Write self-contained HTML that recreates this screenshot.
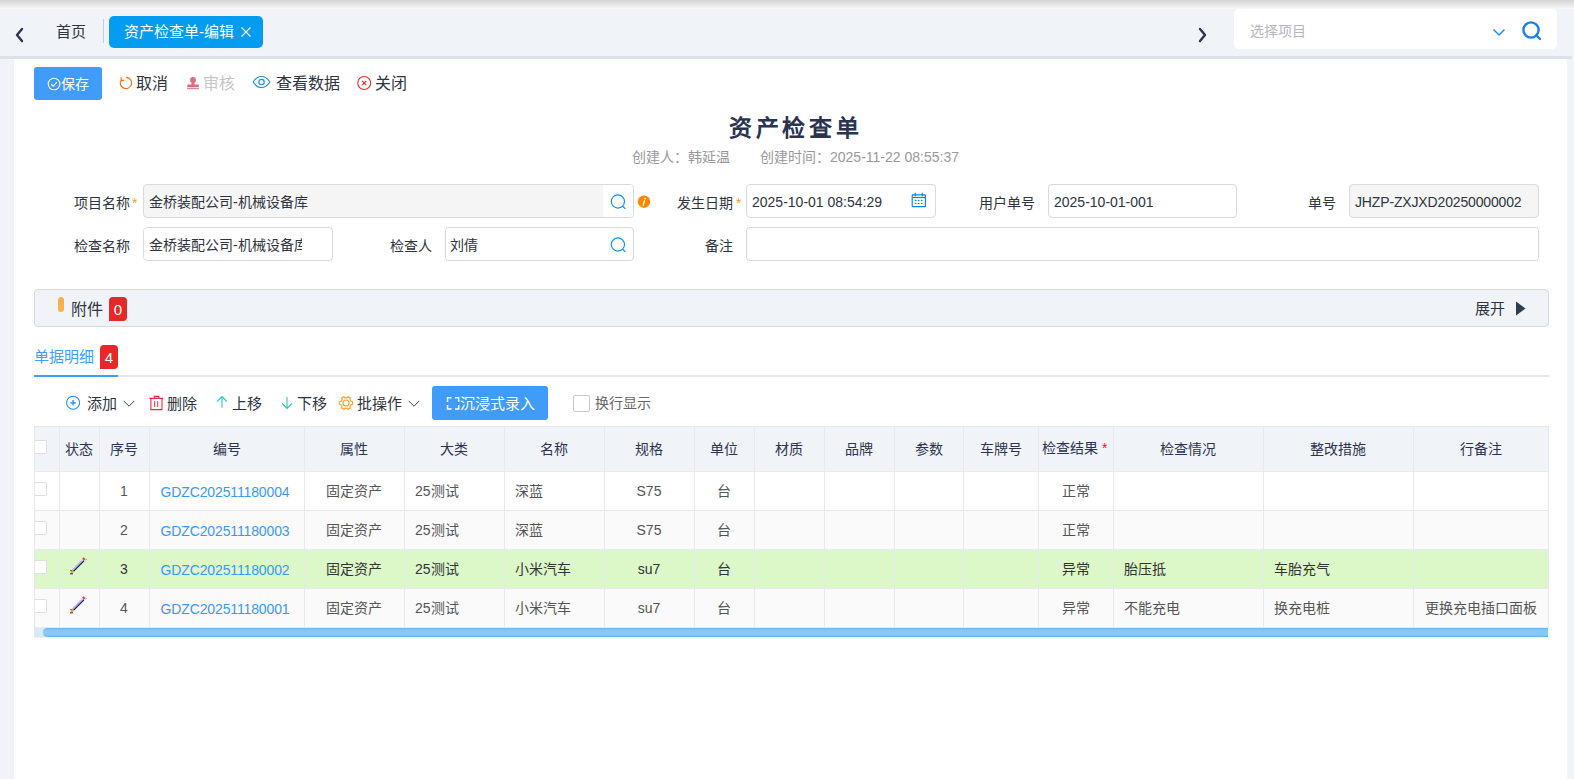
<!DOCTYPE html>
<html lang="zh-CN">
<head>
<meta charset="utf-8">
<style>
*{box-sizing:border-box;margin:0;padding:0}
html,body{width:1574px;height:779px;overflow:hidden}
body{position:relative;background:#f0f3f8;font-family:"Liberation Sans",sans-serif;color:#333;font-size:14px}
.a{position:absolute}
.t{position:absolute;white-space:nowrap;line-height:1}
#topshadow{left:0;top:0;width:1574px;height:9px;background:linear-gradient(#d4d4d4,#f8f8f8)}
#tabline{left:0;top:56px;width:1572px;height:3px;background:#dde2ea}
#content{left:14px;top:59px;width:1553px;height:720px;background:#fff}
.inp{position:absolute;border:1px solid #d9dadd;border-radius:4px;background:#fff;height:34px}
.lbl{position:absolute;white-space:nowrap;line-height:1;font-size:14px;color:#2e3440}
</style>
</head>
<body>
<div class="a" id="topshadow"></div>
<div class="a" id="tabline"></div>
<div class="a" id="content"></div>

<!-- tab bar -->
<svg class="a" style="left:14px;top:26px" width="12" height="18" viewBox="0 0 12 18"><path d="M8 3 L3 9 L8 15" fill="none" stroke="#2b3352" stroke-width="2.4" stroke-linecap="round" stroke-linejoin="round"/></svg>
<div class="t" style="left:56px;top:24px;font-size:15px;color:#2e3440">首页</div>
<div class="a" style="left:103px;top:19px;width:1px;height:24px;background:#c9ccd3"></div>
<div class="a" style="left:109px;top:16px;width:154px;height:32px;background:#049cf0;border-radius:5px"></div>
<div class="t" style="left:124px;top:24px;font-size:15px;color:#fff">资产检查单-编辑</div>
<svg class="a" style="left:239.5px;top:26px" width="12" height="12" viewBox="0 0 12 12"><path d="M1.5 1.5L10.5 10.5M10.5 1.5L1.5 10.5" stroke="#fff" stroke-width="1.2"/></svg>

<svg class="a" style="left:1196px;top:26px" width="12" height="18" viewBox="0 0 12 18"><path d="M4 3 L9 9 L4 15" fill="none" stroke="#2b3352" stroke-width="2.4" stroke-linecap="round" stroke-linejoin="round"/></svg>
<div class="a" style="left:1234px;top:9px;width:323px;height:40px;background:#fff;border-radius:5px"></div>
<div class="t" style="left:1250px;top:24px;font-size:14px;color:#b4b8c0">选择项目</div>
<svg class="a" style="left:1492px;top:27px" width="14" height="10" viewBox="0 0 14 10"><path d="M1.5 2.5L7 8L12.5 2.5" fill="none" stroke="#1f8ff0" stroke-width="1.5"/></svg>
<svg class="a" style="left:1521px;top:20px" width="22" height="22" viewBox="0 0 22 22"><circle cx="10" cy="10" r="7.6" fill="none" stroke="#1a7ff0" stroke-width="2.4"/><path d="M15.5 15.5L19 19" stroke="#1a7ff0" stroke-width="2.4" stroke-linecap="round"/></svg>


<!-- toolbar -->
<div class="a" style="left:34px;top:67px;width:68px;height:33px;background:#409cf8;border-radius:3px"></div>
<svg class="a" style="left:47px;top:76.5px" width="14" height="14" viewBox="0 0 14 14"><circle cx="7" cy="7" r="5.8" fill="none" stroke="#fff" stroke-width="1.05"/><path d="M4.2 7.2L6.2 9.1L9.9 5.2" fill="none" stroke="#fff" stroke-width="1.2"/></svg>
<div class="t" style="left:61px;top:77px;font-size:14px;color:#fff">保存</div>
<svg class="a" style="left:118px;top:75px" width="16" height="16" viewBox="0 0 16 16"><path d="M8 2.35A5.65 5.65 0 1 1 3.1 5.2" fill="none" stroke="#ff6a0a" stroke-width="1.1"/><path d="M3.1 2.2L3.3 5.6L6.4 5.1" fill="none" stroke="#ff6a0a" stroke-width="1.1"/></svg>
<div class="t" style="left:136px;top:76px;font-size:16px;color:#2e3440">取消</div>
<svg class="a" style="left:186px;top:76px" width="14" height="14" viewBox="0 0 14 14"><circle cx="7" cy="4" r="2.9" fill="#dc6d81"/><path d="M5.8 6h2.4l0.5 2.6h3.6l0.6 0.8v1.8H1.2V9.4l0.6-0.8h3.5z" fill="#dc6d81"/><rect x="1" y="12.2" width="12" height="1" fill="#dc6d81"/></svg>
<div class="t" style="left:203px;top:76px;font-size:16px;color:#c3c6cd">审核</div>
<svg class="a" style="left:252px;top:75px" width="19" height="14" viewBox="0 0 19 14"><path d="M1.2 7C3.6 3 6.4 1.5 9.5 1.5S15.4 3 17.8 7C15.4 11 12.6 12.5 9.5 12.5S3.6 11 1.2 7z" fill="none" stroke="#1890f0" stroke-width="1.15"/><circle cx="9.5" cy="7" r="2.7" fill="none" stroke="#1890f0" stroke-width="1.15"/></svg>
<div class="t" style="left:276px;top:76px;font-size:16px;color:#2e3440">查看数据</div>
<svg class="a" style="left:357px;top:76px" width="14" height="14" viewBox="0 0 14 14"><circle cx="7.2" cy="7" r="6.45" fill="none" stroke="#f42828" stroke-width="1.1"/><path d="M5.1 4.9L9.3 9.1M9.3 4.9L5.1 9.1" stroke="#f42828" stroke-width="1.2"/></svg>
<div class="t" style="left:375px;top:76px;font-size:16px;color:#2e3440">关闭</div>

<!-- title -->
<div class="t" style="left:729px;top:117px;font-size:23px;font-weight:bold;letter-spacing:3.7px;color:#2b3350">资产检查单</div>
<div class="t" style="left:632px;top:150px;font-size:14px;color:#999">创建人：韩延温</div>
<div class="t" style="left:760px;top:150px;font-size:14px;color:#999">创建时间：2025-11-22 08:55:37</div>

<!-- form row 1 -->
<div class="lbl" style="left:74px;top:196px">项目名称</div>
<div class="t" style="left:132px;top:196px;font-size:14px;color:#f79a2e">*</div>
<div class="inp" style="left:143px;top:184px;width:491px;height:34px;background:#f5f5f5"></div>
<div class="a" style="left:603px;top:185px;width:30px;height:32px;background:#fff;border-radius:0 3px 3px 0"></div>
<div class="lbl" style="left:149px;top:195px">金桥装配公司-机械设备库</div>
<svg class="a" style="left:610px;top:193px" width="17" height="17" viewBox="0 0 17 17"><circle cx="7.9" cy="8.5" r="6.6" fill="none" stroke="#0a8ff8" stroke-width="1.15"/><path d="M12.6 13.1L15.4 15.9" stroke="#0a8ff8" stroke-width="1.2"/></svg>
<svg class="a" style="left:637px;top:195px" width="14" height="14" viewBox="0 0 14 14"><circle cx="7" cy="6.7" r="6.2" fill="#fd8800"/><ellipse cx="8.1" cy="3.6" rx="0.95" ry="0.8" fill="#fff"/><path d="M7.5 5.6L6.2 10.4" stroke="#fff" stroke-width="1.25" stroke-linecap="round"/></svg>
<div class="lbl" style="left:677px;top:196px">发生日期</div>
<div class="t" style="left:736px;top:196px;font-size:14px;color:#f79a2e">*</div>
<div class="inp" style="left:746px;top:184px;width:190px;height:34px"></div>
<div class="lbl" style="left:752px;top:195px">2025-10-01 08:54:29</div>
<svg class="a" style="left:905px;top:188px" width="28" height="24" viewBox="0 0 28 24"><rect x="7.2" y="6.8" width="13.2" height="11.8" rx="0.6" fill="none" stroke="#0a84f5" stroke-width="1.15"/><path d="M7.2 9.5H20.4" stroke="#0a84f5" stroke-width="1.15"/><path d="M10.3 5.2V7.8M17.3 5.2V7.8" stroke="#0a84f5" stroke-width="1.2" stroke-linecap="round"/><g fill="#0a84f5"><ellipse cx="10.6" cy="12.5" rx="0.95" ry="0.7"/><ellipse cx="13.6" cy="12.5" rx="0.95" ry="0.7"/><ellipse cx="16.7" cy="12.5" rx="0.95" ry="0.7"/><ellipse cx="10.6" cy="15.4" rx="0.95" ry="0.7"/><ellipse cx="13.6" cy="15.4" rx="0.95" ry="0.7"/><ellipse cx="16.7" cy="15.4" rx="0.95" ry="0.7"/></g></svg>
<div class="lbl" style="left:979px;top:196px">用户单号</div>
<div class="inp" style="left:1048px;top:184px;width:189px;height:34px"></div>
<div class="lbl" style="left:1054px;top:195px">2025-10-01-001</div>
<div class="lbl" style="left:1308px;top:196px">单号</div>
<div class="inp" style="left:1349px;top:184px;width:190px;height:34px;background:#f5f5f5"></div>
<div class="lbl" style="left:1355px;top:195px;letter-spacing:-0.15px">JHZP-ZXJXD20250000002</div>

<!-- form row 2 -->
<div class="lbl" style="left:74px;top:239px">检查名称</div>
<div class="inp" style="left:143px;top:227px;width:190px;height:34px"></div>
<div class="lbl" style="left:149px;top:238px;width:153px;overflow:hidden">金桥装配公司-机械设备库</div>
<div class="lbl" style="left:390px;top:239px">检查人</div>
<div class="inp" style="left:445px;top:227px;width:189px;height:34px"></div>
<div class="lbl" style="left:450px;top:238px">刘倩</div>
<svg class="a" style="left:610px;top:236px" width="17" height="17" viewBox="0 0 17 17"><circle cx="7.9" cy="8.5" r="6.6" fill="none" stroke="#0a8ff8" stroke-width="1.15"/><path d="M12.6 13.1L15.4 15.9" stroke="#0a8ff8" stroke-width="1.2"/></svg>
<div class="lbl" style="left:705px;top:239px">备注</div>
<div class="inp" style="left:746px;top:227px;width:793px;height:34px"></div>

<!-- attachments -->
<div class="a" style="left:34px;top:289px;width:1515px;height:38px;background:#f0f3f8;border:1px solid #d8d9db;border-radius:4px"></div>
<div class="a" style="left:58px;top:297px;width:6px;height:15px;background:#fcae4f;border-radius:3px"></div>
<div class="t" style="left:71px;top:302px;font-size:16px;color:#2e3440">附件</div>
<div class="a" style="left:109px;top:297px;width:18px;height:24px;background:#e62828;border-radius:4px 4px 4px 0"></div>
<div class="t" style="left:109px;top:302px;width:18px;text-align:center;font-size:15px;color:#fff">0</div>
<div class="t" style="left:1475px;top:301px;font-size:15px;color:#2e3440">展开</div>
<svg class="a" style="left:1515px;top:301px" width="11" height="15" viewBox="0 0 11 15"><path d="M1 0.5L10.5 7.5L1 14.5z" fill="#2c3e50"/></svg>

<!-- detail tab -->
<div class="t" style="left:34px;top:349px;font-size:15px;color:#409eff">单据明细</div>
<div class="a" style="left:100px;top:345px;width:18px;height:24px;background:#e62828;border-radius:4px 4px 4px 0"></div>
<div class="t" style="left:100px;top:350px;width:18px;text-align:center;font-size:15px;color:#fff">4</div>
<div class="a" style="left:34px;top:375px;width:1515px;height:2px;background:#e4e7ed"></div>
<div class="a" style="left:34px;top:375px;width:84px;height:2px;background:#409eff"></div>

<!-- table toolbar -->
<svg class="a" style="left:65px;top:395px" width="16" height="16" viewBox="0 0 16 16"><circle cx="8.1" cy="7.8" r="6.5" fill="none" stroke="#1890ff" stroke-width="1.05"/><path d="M8.1 5V10.6M5.3 7.8H10.9" stroke="#1890ff" stroke-width="1.3"/></svg>
<div class="t" style="left:87px;top:396px;font-size:15px;color:#2e3440">添加</div>
<svg class="a" style="left:123px;top:400px" width="12" height="8" viewBox="0 0 12 8"><path d="M0.8 1L6 6.2L11.2 1" fill="none" stroke="#3a4050" stroke-width="1"/></svg>
<svg class="a" style="left:145px;top:390px" width="22" height="22" viewBox="0 0 22 22"><path d="M4.3 8.4H18.1M9.2 8.4V6.4H13.8V8.4M5.9 8.4V19.6H17V8.4" fill="none" stroke="#f0283c" stroke-width="1.1"/><path d="M9.7 11.2V17M12.7 11.2V17" stroke="#f0283c" stroke-width="1"/></svg>
<div class="t" style="left:167px;top:396px;font-size:15px;color:#2e3440">删除</div>
<svg class="a" style="left:215px;top:395px" width="14" height="14" viewBox="0 0 14 14"><path d="M7 12.8V1.8M2 6.6L7 1.6L12 6.6" fill="none" stroke="#1fcbbf" stroke-width="1.05"/></svg>
<div class="t" style="left:232px;top:396px;font-size:15px;color:#2e3440">上移</div>
<svg class="a" style="left:280px;top:396px" width="14" height="14" viewBox="0 0 14 14"><path d="M7 1V12.2M2 7.4L7 12.4L12 7.4" fill="none" stroke="#1fcbbf" stroke-width="1.05"/></svg>
<div class="t" style="left:297px;top:396px;font-size:15px;color:#2e3440">下移</div>
<svg class="a" style="left:338px;top:395px" width="16" height="16" viewBox="0 0 16 16"><path d="M12.68 5.51 L13.07 6.45 L14.58 6.72 L14.58 9.28 L13.07 9.55 L12.68 10.49 L12.49 10.81 L11.88 11.61 L12.40 13.06 L10.18 14.33 L9.19 13.16 L8.18 13.30 L7.82 13.30 L6.81 13.16 L5.82 14.33 L3.60 13.06 L4.12 11.61 L3.51 10.81 L3.32 10.49 L2.93 9.55 L1.42 9.28 L1.42 6.72 L2.93 6.45 L3.32 5.51 L3.51 5.19 L4.12 4.39 L3.60 2.94 L5.82 1.67 L6.81 2.84 L7.82 2.70 L8.18 2.70 L9.19 2.84 L10.18 1.67 L12.40 2.94 L11.88 4.39 L12.49 5.19Z" fill="none" stroke="#ff9a1f" stroke-width="1.1" stroke-linejoin="round"/><circle cx="8" cy="8" r="3" fill="none" stroke="#ff9a1f" stroke-width="1.1"/></svg>
<div class="t" style="left:357px;top:396px;font-size:15px;color:#2e3440">批操作</div>
<svg class="a" style="left:408px;top:400px" width="12" height="8" viewBox="0 0 12 8"><path d="M0.8 1L6 6.2L11.2 1" fill="none" stroke="#3a4050" stroke-width="1"/></svg>
<div class="a" style="left:432px;top:386px;width:116px;height:34px;background:#409cf8;border-radius:3px"></div>
<svg class="a" style="left:440px;top:392px" width="22" height="22" viewBox="0 0 22 22"><path d="M11.6 5.8H7.5V9.9M15 5.8H18.7V9.9M7.5 13V16.9H11.6M18.7 13V16.9H15" fill="none" stroke="#fff" stroke-width="1.5"/></svg>
<div class="t" style="left:460px;top:396px;font-size:15px;color:#fff">沉浸式录入</div>
<div class="a" style="left:573px;top:395px;width:17px;height:17px;border:1px solid #c6c9cf;border-radius:2px;background:#fff"></div>
<div class="t" style="left:595px;top:396px;font-size:14px;color:#666">换行显示</div>


<!-- table -->
<div class="a" style="left:34px;top:426px;width:1515px;height:45px;background:#f0f3f8"></div>
<div class="a" style="left:34px;top:471px;width:1515px;height:39px;background:#ffffff"></div>
<div class="a" style="left:34px;top:510px;width:1515px;height:39px;background:#fafafa"></div>
<div class="a" style="left:34px;top:549px;width:1515px;height:39px;background:#dcf7c8"></div>
<div class="a" style="left:34px;top:588px;width:1515px;height:39px;background:#fafafa"></div>
<div class="a" style="left:34px;top:426px;width:1515px;height:1px;background:#e8e9ec"></div>
<div class="a" style="left:34px;top:471px;width:1515px;height:1px;background:#e8e9ec"></div>
<div class="a" style="left:34px;top:510px;width:1515px;height:1px;background:#e8e9ec"></div>
<div class="a" style="left:34px;top:549px;width:1515px;height:1px;background:#e8e9ec"></div>
<div class="a" style="left:34px;top:588px;width:1515px;height:1px;background:#e8e9ec"></div>
<div class="a" style="left:34px;top:627px;width:1515px;height:1px;background:#e8e9ec"></div>
<div class="a" style="left:34px;top:426px;width:1px;height:201px;background:#e8e9ec"></div>
<div class="a" style="left:59px;top:426px;width:1px;height:201px;background:#e8e9ec"></div>
<div class="a" style="left:99px;top:426px;width:1px;height:201px;background:#e8e9ec"></div>
<div class="a" style="left:149px;top:426px;width:1px;height:201px;background:#e8e9ec"></div>
<div class="a" style="left:304px;top:426px;width:1px;height:201px;background:#e8e9ec"></div>
<div class="a" style="left:404px;top:426px;width:1px;height:201px;background:#e8e9ec"></div>
<div class="a" style="left:504px;top:426px;width:1px;height:201px;background:#e8e9ec"></div>
<div class="a" style="left:604px;top:426px;width:1px;height:201px;background:#e8e9ec"></div>
<div class="a" style="left:694px;top:426px;width:1px;height:201px;background:#e8e9ec"></div>
<div class="a" style="left:754px;top:426px;width:1px;height:201px;background:#e8e9ec"></div>
<div class="a" style="left:824px;top:426px;width:1px;height:201px;background:#e8e9ec"></div>
<div class="a" style="left:894px;top:426px;width:1px;height:201px;background:#e8e9ec"></div>
<div class="a" style="left:963px;top:426px;width:1px;height:201px;background:#e8e9ec"></div>
<div class="a" style="left:1038px;top:426px;width:1px;height:201px;background:#e8e9ec"></div>
<div class="a" style="left:1113px;top:426px;width:1px;height:201px;background:#e8e9ec"></div>
<div class="a" style="left:1263px;top:426px;width:1px;height:201px;background:#e8e9ec"></div>
<div class="a" style="left:1413px;top:426px;width:1px;height:201px;background:#e8e9ec"></div>
<div class="a" style="left:1548px;top:426px;width:1px;height:201px;background:#e8e9ec"></div>
<div class="a" style="left:34px;top:627px;width:1px;height:11px;background:#e8e9ec"></div>
<div class="a" style="left:34px;top:637px;width:1515px;height:1px;background:#f0f0f0"></div>
<div class="a" style="left:35px;top:628px;width:9px;height:9px;background:#d9e9f7"></div>
<div class="a" style="left:43px;top:628px;width:1505px;height:9px;background:linear-gradient(#70b0e6,#8ac8f4 25%,#8ac8f4 75%,#70b0e6);border-radius:4px 0 0 4px"></div>
<div class="a" style="left:60px;top:427px;width:39px;height:44px;line-height:44px;text-align:center;color:#2c3350;font-size:14px;padding-right:1px;white-space:nowrap;overflow:hidden">状态</div>
<div class="a" style="left:100px;top:427px;width:49px;height:44px;line-height:44px;text-align:center;color:#2c3350;font-size:14px;padding-right:1px;white-space:nowrap;overflow:hidden">序号</div>
<div class="a" style="left:150px;top:427px;width:154px;height:44px;line-height:44px;text-align:center;color:#2c3350;font-size:14px;padding-right:1px;white-space:nowrap;overflow:hidden">编号</div>
<div class="a" style="left:305px;top:427px;width:99px;height:44px;line-height:44px;text-align:center;color:#2c3350;font-size:14px;padding-right:1px;white-space:nowrap;overflow:hidden">属性</div>
<div class="a" style="left:405px;top:427px;width:99px;height:44px;line-height:44px;text-align:center;color:#2c3350;font-size:14px;padding-right:1px;white-space:nowrap;overflow:hidden">大类</div>
<div class="a" style="left:505px;top:427px;width:99px;height:44px;line-height:44px;text-align:center;color:#2c3350;font-size:14px;padding-right:1px;white-space:nowrap;overflow:hidden">名称</div>
<div class="a" style="left:605px;top:427px;width:89px;height:44px;line-height:44px;text-align:center;color:#2c3350;font-size:14px;padding-right:1px;white-space:nowrap;overflow:hidden">规格</div>
<div class="a" style="left:695px;top:427px;width:59px;height:44px;line-height:44px;text-align:center;color:#2c3350;font-size:14px;padding-right:1px;white-space:nowrap;overflow:hidden">单位</div>
<div class="a" style="left:755px;top:427px;width:69px;height:44px;line-height:44px;text-align:center;color:#2c3350;font-size:14px;padding-right:1px;white-space:nowrap;overflow:hidden">材质</div>
<div class="a" style="left:825px;top:427px;width:69px;height:44px;line-height:44px;text-align:center;color:#2c3350;font-size:14px;padding-right:1px;white-space:nowrap;overflow:hidden">品牌</div>
<div class="a" style="left:895px;top:427px;width:68px;height:44px;line-height:44px;text-align:center;color:#2c3350;font-size:14px;padding-right:1px;white-space:nowrap;overflow:hidden">参数</div>
<div class="a" style="left:964px;top:427px;width:74px;height:44px;line-height:44px;text-align:center;color:#2c3350;font-size:14px;padding-right:1px;white-space:nowrap;overflow:hidden">车牌号</div>
<div class="a" style="left:1114px;top:427px;width:149px;height:44px;line-height:44px;text-align:center;color:#2c3350;font-size:14px;padding-right:1px;white-space:nowrap;overflow:hidden">检查情况</div>
<div class="a" style="left:1264px;top:427px;width:149px;height:44px;line-height:44px;text-align:center;color:#2c3350;font-size:14px;padding-right:1px;white-space:nowrap;overflow:hidden">整改措施</div>
<div class="a" style="left:1414px;top:427px;width:134px;height:44px;line-height:44px;text-align:center;color:#2c3350;font-size:14px;padding-right:1px;white-space:nowrap;overflow:hidden">行备注</div>
<div class="t" style="left:1042px;top:441px;font-size:14px;color:#2c3350">检查结果</div>
<div class="t" style="left:1102px;top:441px;font-size:14px;color:#f01818">*</div>
<div class="a" style="left:100px;top:472px;width:49px;height:38px;line-height:38px;text-align:center;color:#555;font-size:14px;padding-right:1px;white-space:nowrap;overflow:hidden">1</div>
<div class="a" style="left:150px;top:473px;width:154px;height:38px;line-height:38px;text-align:center;color:#3d97f5;font-size:14px;padding-right:1px;white-space:nowrap;overflow:hidden;letter-spacing:-0.13px;text-indent:-3px">GDZC202511180004</div>
<div class="a" style="left:305px;top:472px;width:99px;height:38px;line-height:38px;text-align:center;color:#555;font-size:14px;padding-right:1px;white-space:nowrap;overflow:hidden">固定资产</div>
<div class="a" style="left:405px;top:472px;width:99px;height:38px;line-height:38px;text-align:left;color:#555;font-size:14px;padding-left:10px;white-space:nowrap;overflow:hidden">25测试</div>
<div class="a" style="left:505px;top:472px;width:99px;height:38px;line-height:38px;text-align:left;color:#555;font-size:14px;padding-left:10px;white-space:nowrap;overflow:hidden">深蓝</div>
<div class="a" style="left:605px;top:472px;width:89px;height:38px;line-height:38px;text-align:center;color:#555;font-size:14px;padding-right:1px;white-space:nowrap;overflow:hidden">S75</div>
<div class="a" style="left:695px;top:472px;width:59px;height:38px;line-height:38px;text-align:center;color:#555;font-size:14px;padding-right:1px;white-space:nowrap;overflow:hidden">台</div>
<div class="a" style="left:1039px;top:472px;width:74px;height:38px;line-height:38px;text-align:center;color:#555;font-size:14px;padding-right:1px;white-space:nowrap;overflow:hidden">正常</div>
<div class="a" style="left:35px;top:482px;width:12px;height:14px;border:1px solid #dcdfe6;border-left:none;border-radius:0 2px 2px 0;background:#fff"></div>
<div class="a" style="left:100px;top:511px;width:49px;height:38px;line-height:38px;text-align:center;color:#555;font-size:14px;padding-right:1px;white-space:nowrap;overflow:hidden">2</div>
<div class="a" style="left:150px;top:512px;width:154px;height:38px;line-height:38px;text-align:center;color:#3d97f5;font-size:14px;padding-right:1px;white-space:nowrap;overflow:hidden;letter-spacing:-0.13px;text-indent:-3px">GDZC202511180003</div>
<div class="a" style="left:305px;top:511px;width:99px;height:38px;line-height:38px;text-align:center;color:#555;font-size:14px;padding-right:1px;white-space:nowrap;overflow:hidden">固定资产</div>
<div class="a" style="left:405px;top:511px;width:99px;height:38px;line-height:38px;text-align:left;color:#555;font-size:14px;padding-left:10px;white-space:nowrap;overflow:hidden">25测试</div>
<div class="a" style="left:505px;top:511px;width:99px;height:38px;line-height:38px;text-align:left;color:#555;font-size:14px;padding-left:10px;white-space:nowrap;overflow:hidden">深蓝</div>
<div class="a" style="left:605px;top:511px;width:89px;height:38px;line-height:38px;text-align:center;color:#555;font-size:14px;padding-right:1px;white-space:nowrap;overflow:hidden">S75</div>
<div class="a" style="left:695px;top:511px;width:59px;height:38px;line-height:38px;text-align:center;color:#555;font-size:14px;padding-right:1px;white-space:nowrap;overflow:hidden">台</div>
<div class="a" style="left:1039px;top:511px;width:74px;height:38px;line-height:38px;text-align:center;color:#555;font-size:14px;padding-right:1px;white-space:nowrap;overflow:hidden">正常</div>
<div class="a" style="left:35px;top:521px;width:12px;height:14px;border:1px solid #dcdfe6;border-left:none;border-radius:0 2px 2px 0;background:#fff"></div>
<div class="a" style="left:100px;top:550px;width:49px;height:38px;line-height:38px;text-align:center;color:#333;font-size:14px;padding-right:1px;white-space:nowrap;overflow:hidden">3</div>
<div class="a" style="left:150px;top:551px;width:154px;height:38px;line-height:38px;text-align:center;color:#3d97f5;font-size:14px;padding-right:1px;white-space:nowrap;overflow:hidden;letter-spacing:-0.13px;text-indent:-3px">GDZC202511180002</div>
<div class="a" style="left:305px;top:550px;width:99px;height:38px;line-height:38px;text-align:center;color:#333;font-size:14px;padding-right:1px;white-space:nowrap;overflow:hidden">固定资产</div>
<div class="a" style="left:405px;top:550px;width:99px;height:38px;line-height:38px;text-align:left;color:#333;font-size:14px;padding-left:10px;white-space:nowrap;overflow:hidden">25测试</div>
<div class="a" style="left:505px;top:550px;width:99px;height:38px;line-height:38px;text-align:left;color:#333;font-size:14px;padding-left:10px;white-space:nowrap;overflow:hidden">小米汽车</div>
<div class="a" style="left:605px;top:550px;width:89px;height:38px;line-height:38px;text-align:center;color:#333;font-size:14px;padding-right:1px;white-space:nowrap;overflow:hidden">su7</div>
<div class="a" style="left:695px;top:550px;width:59px;height:38px;line-height:38px;text-align:center;color:#333;font-size:14px;padding-right:1px;white-space:nowrap;overflow:hidden">台</div>
<div class="a" style="left:1039px;top:550px;width:74px;height:38px;line-height:38px;text-align:center;color:#333;font-size:14px;padding-right:1px;white-space:nowrap;overflow:hidden">异常</div>
<div class="a" style="left:1114px;top:550px;width:149px;height:38px;line-height:38px;text-align:left;color:#333;font-size:14px;padding-left:10px;white-space:nowrap;overflow:hidden">胎压抵</div>
<div class="a" style="left:1264px;top:550px;width:149px;height:38px;line-height:38px;text-align:left;color:#333;font-size:14px;padding-left:10px;white-space:nowrap;overflow:hidden">车胎充气</div>
<div class="a" style="left:35px;top:560px;width:12px;height:14px;border:1px solid #dcdfe6;border-left:none;border-radius:0 2px 2px 0;background:#fff"></div>
<svg class="a" style="left:63px;top:554px" width="30" height="26" viewBox="0 0 30 26"><path d="M9.3 16.3L19.8 5.8" stroke="#b2b2f2" stroke-width="1.6"/><path d="M10.4 17.4L20.9 6.9" stroke="#14145a" stroke-width="1.3"/><path d="M19.6 6.2L21.6 4.2" stroke="#e64646" stroke-width="2.6"/><path d="M22.6 6.2L23.2 5.6" stroke="#111" stroke-width="1"/><path d="M18.4 6.6L19.6 5.4" stroke="#f2f2f2" stroke-width="1.2"/><circle cx="9" cy="17.6" r="1.5" fill="#e9a52a"/><circle cx="8" cy="16.5" r="0.6" fill="#111"/><path d="M7 19.8h3" stroke="#111" stroke-width="0.9"/></svg>
<div class="a" style="left:100px;top:589px;width:49px;height:38px;line-height:38px;text-align:center;color:#555;font-size:14px;padding-right:1px;white-space:nowrap;overflow:hidden">4</div>
<div class="a" style="left:150px;top:590px;width:154px;height:38px;line-height:38px;text-align:center;color:#3d97f5;font-size:14px;padding-right:1px;white-space:nowrap;overflow:hidden;letter-spacing:-0.13px;text-indent:-3px">GDZC202511180001</div>
<div class="a" style="left:305px;top:589px;width:99px;height:38px;line-height:38px;text-align:center;color:#555;font-size:14px;padding-right:1px;white-space:nowrap;overflow:hidden">固定资产</div>
<div class="a" style="left:405px;top:589px;width:99px;height:38px;line-height:38px;text-align:left;color:#555;font-size:14px;padding-left:10px;white-space:nowrap;overflow:hidden">25测试</div>
<div class="a" style="left:505px;top:589px;width:99px;height:38px;line-height:38px;text-align:left;color:#555;font-size:14px;padding-left:10px;white-space:nowrap;overflow:hidden">小米汽车</div>
<div class="a" style="left:605px;top:589px;width:89px;height:38px;line-height:38px;text-align:center;color:#555;font-size:14px;padding-right:1px;white-space:nowrap;overflow:hidden">su7</div>
<div class="a" style="left:695px;top:589px;width:59px;height:38px;line-height:38px;text-align:center;color:#555;font-size:14px;padding-right:1px;white-space:nowrap;overflow:hidden">台</div>
<div class="a" style="left:1039px;top:589px;width:74px;height:38px;line-height:38px;text-align:center;color:#555;font-size:14px;padding-right:1px;white-space:nowrap;overflow:hidden">异常</div>
<div class="a" style="left:1114px;top:589px;width:149px;height:38px;line-height:38px;text-align:left;color:#555;font-size:14px;padding-left:10px;white-space:nowrap;overflow:hidden">不能充电</div>
<div class="a" style="left:1264px;top:589px;width:149px;height:38px;line-height:38px;text-align:left;color:#555;font-size:14px;padding-left:10px;white-space:nowrap;overflow:hidden">换充电桩</div>
<div class="a" style="left:1414px;top:589px;width:134px;height:38px;line-height:38px;text-align:center;color:#555;font-size:14px;padding-right:1px;white-space:nowrap;overflow:hidden">更换充电插口面板</div>
<div class="a" style="left:35px;top:599px;width:12px;height:14px;border:1px solid #dcdfe6;border-left:none;border-radius:0 2px 2px 0;background:#fff"></div>
<svg class="a" style="left:63px;top:593px" width="30" height="26" viewBox="0 0 30 26"><path d="M9.3 16.3L19.8 5.8" stroke="#b2b2f2" stroke-width="1.6"/><path d="M10.4 17.4L20.9 6.9" stroke="#14145a" stroke-width="1.3"/><path d="M19.6 6.2L21.6 4.2" stroke="#e64646" stroke-width="2.6"/><path d="M22.6 6.2L23.2 5.6" stroke="#111" stroke-width="1"/><path d="M18.4 6.6L19.6 5.4" stroke="#f2f2f2" stroke-width="1.2"/><circle cx="9" cy="17.6" r="1.5" fill="#e9a52a"/><circle cx="8" cy="16.5" r="0.6" fill="#111"/><path d="M7 19.8h3" stroke="#111" stroke-width="0.9"/></svg>
<div class="a" style="left:35px;top:440px;width:12px;height:14px;border:1px solid #dcdfe6;border-left:none;border-radius:0 2px 2px 0;background:#fff"></div>
</body>
</html>
